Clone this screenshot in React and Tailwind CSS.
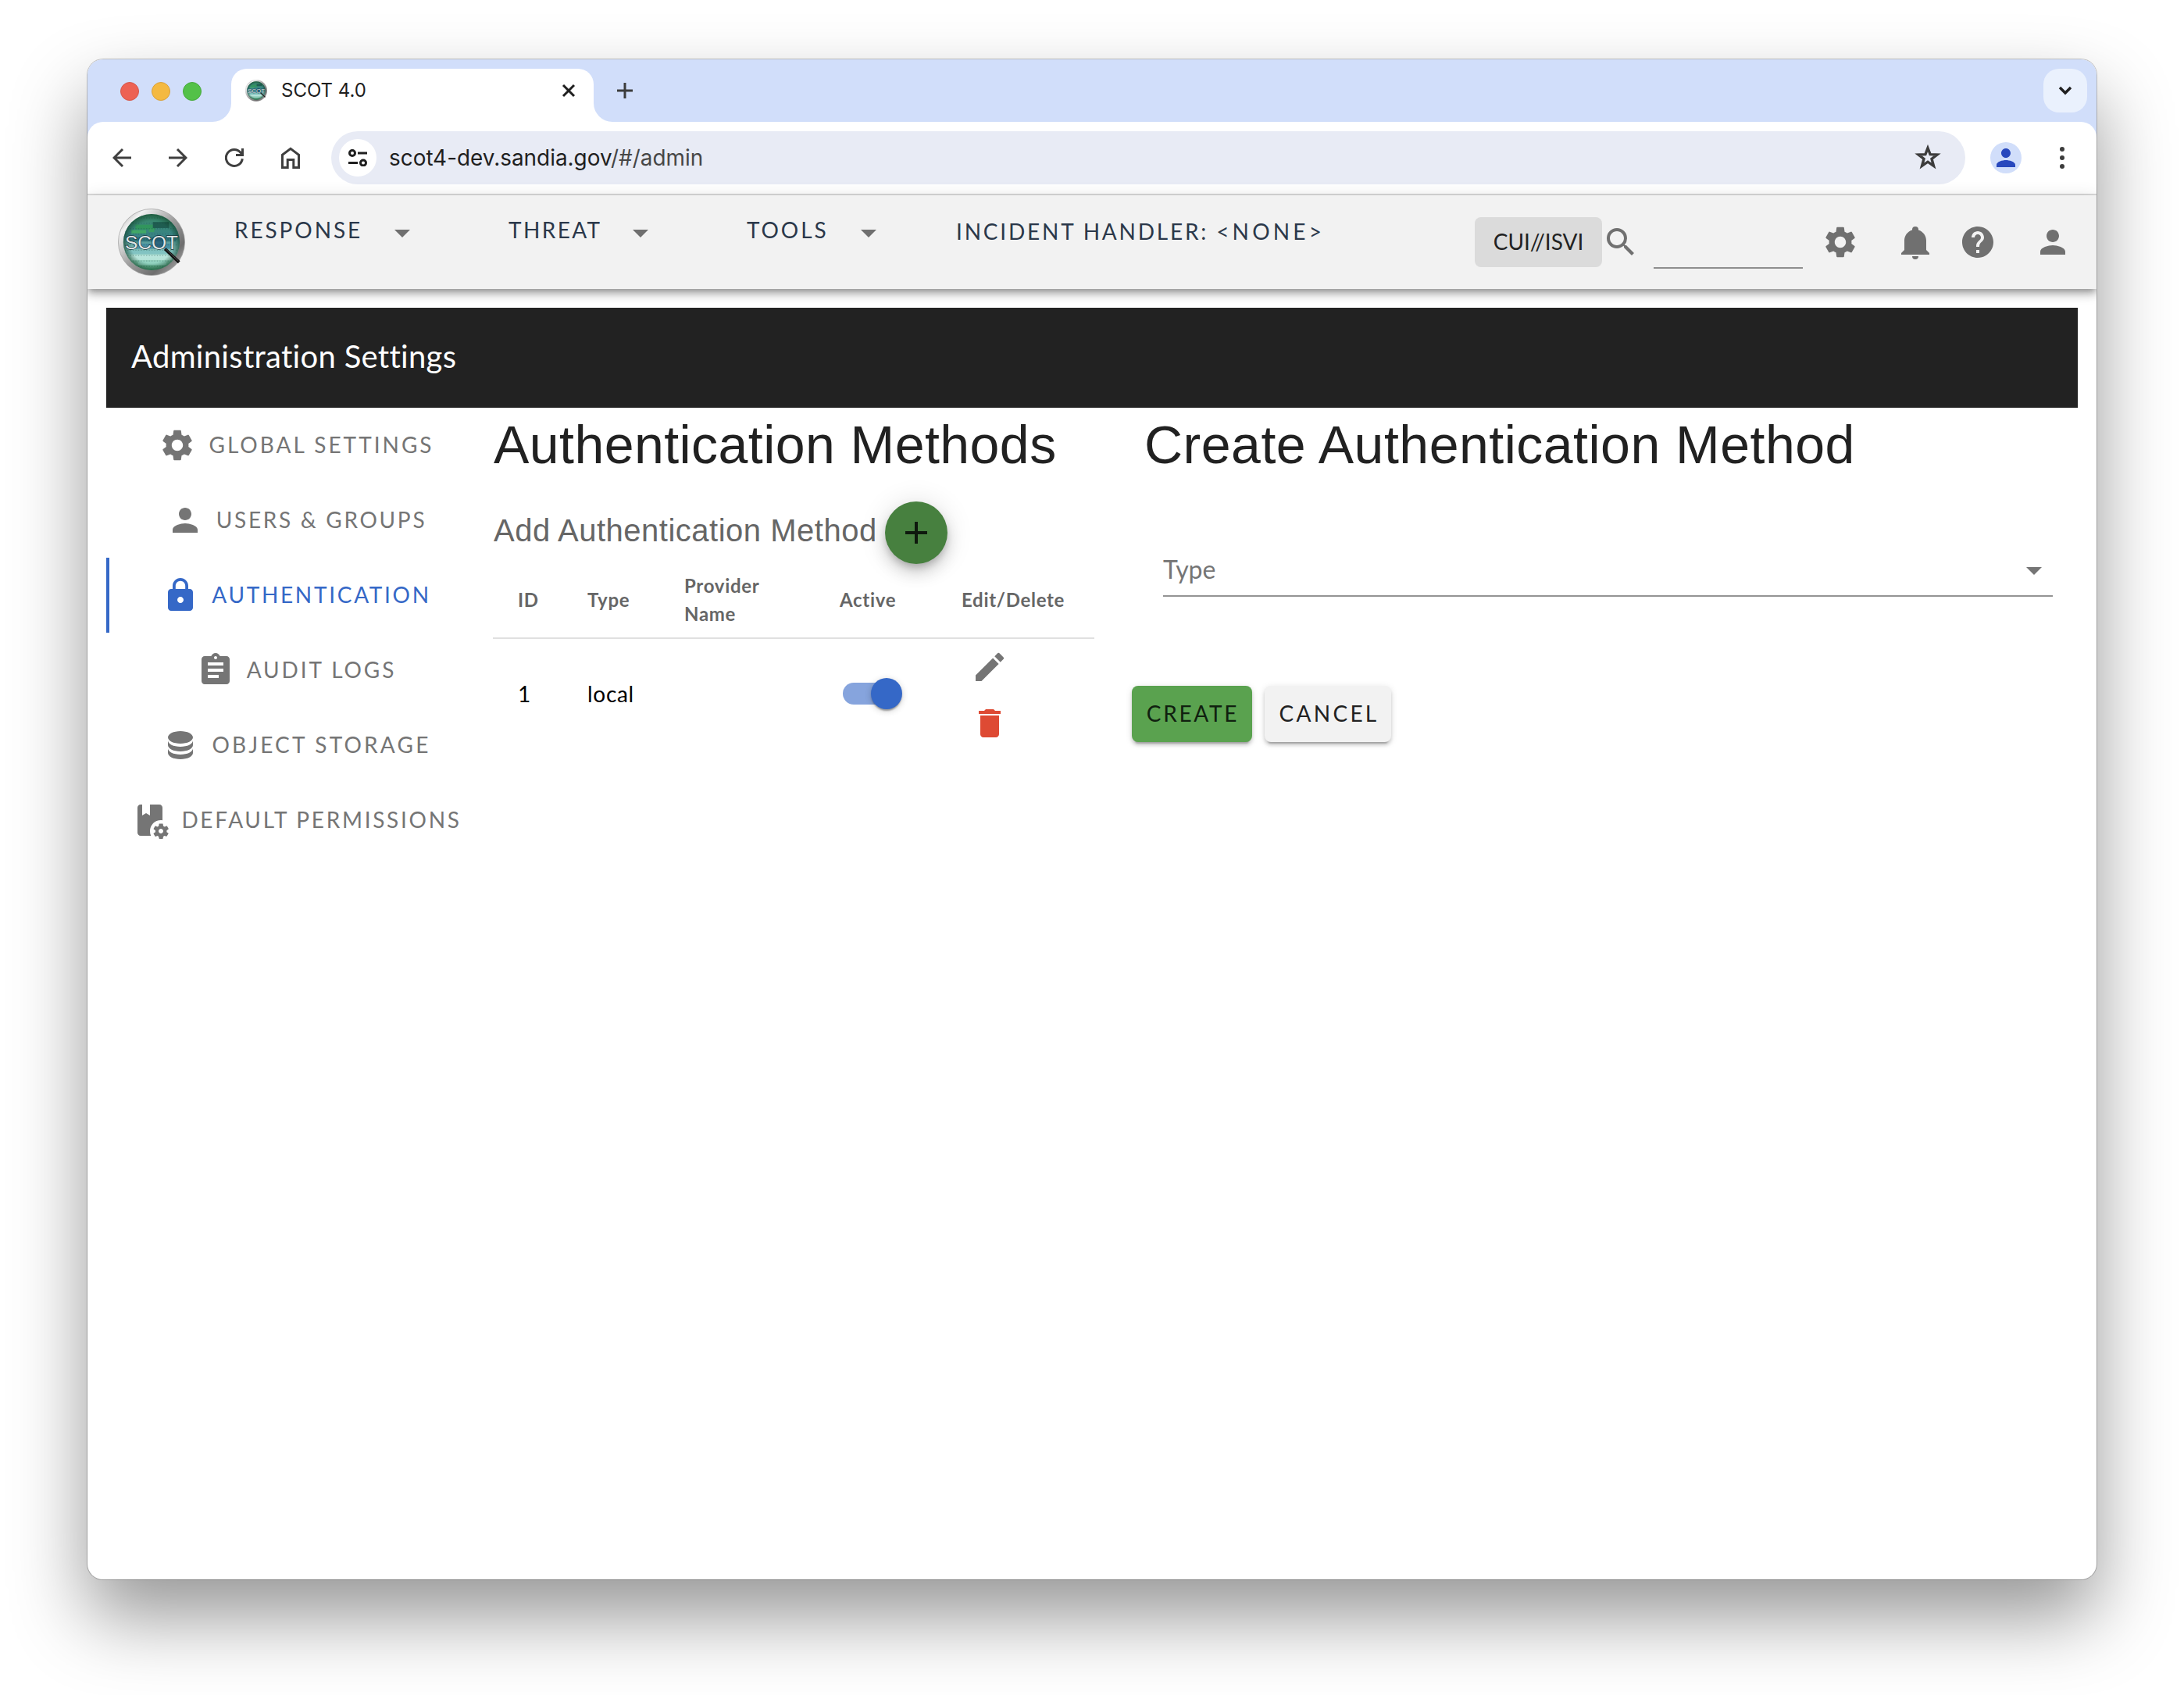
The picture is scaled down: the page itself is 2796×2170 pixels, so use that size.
import React from "react";
import {
  MdAdd,
  MdArrowDropDown,
  MdAssignment,
  MdDelete,
  MdEdit,
  MdHelp,
  MdLock,
  MdPerson,
  MdSearch,
  MdSettings,
} from "react-icons/md";

const BELL_PATH =
  "M21,19V20H3V19L5,17V11C5,7.9 7.03,5.17 10,4.29C10,4.19 10,4.1 10,4A2,2 0 0,1 12,2A2,2 0 0,1 14,4C14,4.1 14,4.19 14,4.29C16.97,5.17 19,7.9 19,11V17L21,19M14,21A2,2 0 0,1 12,23A2,2 0 0,1 10,21";
const DB_PATH =
  "M12,3C7.58,3 4,4.79 4,7C4,9.21 7.58,11 12,11C16.42,11 20,9.21 20,7C20,4.79 16.42,3 12,3M4,9V12C4,14.21 7.58,16 12,16C16.42,16 20,14.21 20,12V9C20,11.21 16.42,13 12,13C7.58,13 4,11.21 4,9M4,14V17C4,19.21 7.58,21 12,21C16.42,21 20,19.21 20,17V14C20,16.21 16.42,18 12,18C7.58,18 4,16.21 4,14Z";
const BOOK_COG_PATH =
  "M18 2C19.1 2 20 2.9 20 4V12.1C19.7 12 19.3 12 19 12C15.1 12 12 15.1 12 19C12 20.1 12.2 21.1 12.6 22H6C4.9 22 4 21.1 4 20V4C4 2.9 4.9 2 6 2H7V9L9.5 7.5L12 9V2H18M23.8 20.4C23.9 20.4 23.9 20.5 23.8 20.6L22.8 22.3C22.7 22.4 22.6 22.4 22.5 22.4L21.3 22C21 22.2 20.8 22.3 20.5 22.5L20.3 23.8C20.3 23.9 20.2 24 20.1 24H18.1C18 24 17.9 23.9 17.8 23.8L17.6 22.5C17.3 22.4 17 22.2 16.8 22L15.6 22.5C15.5 22.5 15.4 22.5 15.3 22.4L14.3 20.7C14.2 20.6 14.3 20.5 14.4 20.4L15.5 19.6V18.6L14.4 17.8C14.3 17.7 14.3 17.6 14.3 17.5L15.3 15.8C15.4 15.7 15.5 15.7 15.6 15.7L16.8 16.2C17.1 16 17.3 15.9 17.6 15.7L17.8 14.4C17.8 14.3 17.9 14.2 18.1 14.2H20.1C20.2 14.2 20.3 14.3 20.3 14.4L20.5 15.7C20.8 15.8 21.1 16 21.4 16.2L22.6 15.7C22.7 15.7 22.9 15.7 22.9 15.8L23.9 17.5C24 17.6 23.9 17.7 23.8 17.8L22.7 18.6V19.6L23.8 20.4M20.5 19C20.5 18.2 19.8 17.5 19 17.5S17.5 18.2 17.5 19 18.2 20.5 19 20.5 20.5 19.8 20.5 19Z";

function PathIcon({ d, className }) {
  return (
    <svg viewBox="0 0 24 24" fill="currentColor" className={className}>
      <path d={d} />
    </svg>
  );
}

function ScotLogo({ className, id }) {
  const rows = [
    [26, 24, 30, 7, "#2f9a55"],
    [20, 32, 22, 5, "#44b45f"],
    [46, 30, 8, 5, "#3aa35a"],
    [52, 20, 24, 9, "#174f45"],
    [14, 42, 72, 7, "#276b74"],
    [24, 52, 54, 8, "#3a86a0"],
    [12, 62, 76, 6, "#7cc0c2"],
    [20, 69, 60, 8, "#bfe8e0"],
    [30, 78, 42, 6, "#9ad8c8"],
  ];
  return (
    <svg viewBox="0 0 100 100" className={className}>
      <defs>
        <linearGradient id={id + "rim"} x1="0" y1="0" x2="1" y2="1">
          <stop offset="0" stopColor="#8d8d8d" />
          <stop offset="0.2" stopColor="#f1f1f1" />
          <stop offset="0.5" stopColor="#9c9c9c" />
          <stop offset="0.75" stopColor="#6e6e6e" />
          <stop offset="1" stopColor="#c9c9c9" />
        </linearGradient>
        <linearGradient id={id + "fill"} x1="0" y1="0" x2="0" y2="1">
          <stop offset="0" stopColor="#3a8a66" />
          <stop offset="0.4" stopColor="#3a8487" />
          <stop offset="0.75" stopColor="#a6dccf" />
          <stop offset="1" stopColor="#4fa97c" />
        </linearGradient>
        <radialGradient id={id + "edge"}>
          <stop offset="0.75" stopColor="#0c3b24" stopOpacity="0" />
          <stop offset="1" stopColor="#0c3b24" stopOpacity="0.6" />
        </radialGradient>
        <clipPath id={id + "clip"}>
          <circle cx="50" cy="50" r="42" />
        </clipPath>
      </defs>
      <circle cx="50" cy="50" r="49.5" fill={`url(#${id}rim)`} stroke="#9a9a9a" strokeWidth="0.8" />
      <circle cx="50" cy="50" r="42" fill={`url(#${id}fill)`} />
      <g clipPath={`url(#${id}clip)`} opacity="0.75">
        {rows.map(([x, y, w, h, c]) => (
          <rect key={y + "-" + x} x={x} y={y} width={w} height={h} fill={c} />
        ))}
        {[14, 22, 30, 38, 46, 54, 62, 70, 78, 86].map((y) => (
          <line key={y} x1="10" x2="90" y1={y} y2={y} stroke="#0f3d38" strokeWidth="1.6" strokeDasharray="1.5 2.5" opacity="0.35" />
        ))}
      </g>
      <circle cx="50" cy="50" r="42" fill={`url(#${id}edge)`} />
      <circle cx="60.5" cy="49" r="10" fill="#1d5170" opacity="0.7" />
      <text
        x="50"
        y="60"
        textAnchor="middle"
        textLength="79"
        lengthAdjust="spacingAndGlyphs"
        fontFamily="Liberation Sans, Arial, sans-serif"
        fontSize="28"
        fill="#dfe6e6"
        stroke="#16333a"
        strokeWidth="1.6"
        paintOrder="stroke"
      >
        SCOT
      </text>
      <line x1="70" y1="60" x2="91" y2="80" stroke="#121212" strokeWidth="4.6" />
      <line x1="71" y1="60" x2="90" y2="78" stroke="#6b6b6b" strokeWidth="0.8" />
    </svg>
  );
}

function TabStrip() {
  return (
    <div className="flex h-20 items-end bg-[#d1defa]">
      <div className="flex h-[68px] w-[160px] items-center gap-4 self-end pl-[42px] pb-[10px]">
        <span className="h-6 w-6 rounded-full border border-[#d5574b] bg-[#ed6254]" />
        <span className="h-6 w-6 rounded-full border border-[#d9a13c] bg-[#f4b941]" />
        <span className="h-6 w-6 rounded-full border border-[#47a93c] bg-[#53c148]" />
      </div>
      <svg viewBox="0 0 24 24" className="h-6 w-6 text-white" fill="currentColor">
        <path d="M24 0V24H0A24 24 0 0 0 24 0Z" />
      </svg>
      <div className="flex h-[68px] w-[464px] items-center rounded-t-[20px] bg-white pb-[12px] pl-[18px] pr-[22px]">
        <ScotLogo id="tab" className="h-7 w-7" />
        <span className="ml-[18px] flex-1 font-['Inter'] text-[24px] leading-7 text-[#1f1f1f]">SCOT 4.0</span>
        <svg viewBox="0 0 20 20" className="h-5 w-5" stroke="#1f1f1f" strokeWidth="3" fill="none">
          <path d="M3 3L17 17M17 3L3 17" />
        </svg>
      </div>
      <svg viewBox="0 0 24 24" className="h-6 w-6 text-white" fill="currentColor">
        <path d="M0 0V24H24A24 24 0 0 1 0 0Z" />
      </svg>
      <svg viewBox="0 0 20 20" className="mb-[30px] ml-[6px] h-5 w-5" stroke="#3c3c3c" strokeWidth="3" fill="none">
        <path d="M10 0V20M0 10H20" />
      </svg>
      <div className="mb-3 ml-auto mr-3 flex h-14 w-14 items-center justify-center rounded-[20px] bg-[#eaf1fd]">
        <svg viewBox="0 0 18 12" className="h-3 w-[18px]" stroke="#1f1f1f" strokeWidth="3.4" fill="none">
          <path d="M2 2L9 9L16 2" />
        </svg>
      </div>
    </div>
  );
}

function Toolbar() {
  return (
    <div className="bg-[#d1defa]">
      <div className="flex h-[94px] items-center rounded-t-[20px] border-b-2 border-[#dcdcdc] bg-white pl-8 pr-[41px]">
        <svg viewBox="0 0 24 28" className="h-7 w-6" stroke="#3f3f3f" strokeWidth="3" fill="none">
          <path d="M24 14H2M13 3L2 14L13 25" />
        </svg>
        <svg viewBox="0 0 24 28" className="ml-12 h-7 w-6" stroke="#3f3f3f" strokeWidth="3" fill="none">
          <path d="M0 14H22M11 3L22 14L11 25" />
        </svg>
        <svg viewBox="0 0 24 28" className="ml-12 h-7 w-6" stroke="#3f3f3f" strokeWidth="3" fill="none">
          <path d="M22.3 15.2A10.5 10.5 0 1 1 20.2 7.5L22.3 10.5" />
          <path d="M22.5 2V10.5H14" />
        </svg>
        <svg viewBox="0 0 24 28" className="ml-12 h-7 w-6" stroke="#3f3f3f" strokeWidth="3" fill="none">
          <path d="M1.5 10.2L12 2.4L22.5 10.2V26.5H15.8V16.5H8.2V26.5H1.5Z" />
        </svg>
        <div className="ml-10 flex h-[68px] w-[2092px] items-center rounded-full bg-[#e8ebf5] pl-[10px] pr-[28px]">
          <div className="flex h-12 w-12 items-center justify-center rounded-full bg-white">
            <svg viewBox="0 0 24 22" className="h-[22px] w-6" stroke="#1f1f1f" strokeWidth="3" fill="none">
              <circle cx="5" cy="5" r="3.5" />
              <path d="M12 5H24M0 17.5H12" />
              <circle cx="19" cy="17.5" r="3.5" />
            </svg>
          </div>
          <span className="ml-4 flex-1 font-['Inter'] text-[27.9px] leading-9 text-[#1f1f1f]">
            scot4-dev.sandia.gov<span className="text-[#474747]">/#/admin</span>
          </span>
          <svg viewBox="0 0 40 40" className="h-10 w-10 text-[#3c3c3c]" fill="none" stroke="currentColor" strokeWidth="3.4">
            <path d="M20 7.5L23.1 15.7L32 16.1L25 21.5L27.5 30.4L20 25.2L12.5 30.4L15 21.5L8 16.1L16.9 15.7Z" />
          </svg>
        </div>
        <div className="ml-8 flex h-10 w-10 items-center justify-center rounded-full bg-[#d1defa]">
          <MdPerson className="h-9 w-9 text-[#2848bd]" />
        </div>
        <svg viewBox="0 0 6 28" className="ml-[49px] h-7 w-1.5" fill="#3c3c3c">
          <circle cx="3" cy="3" r="3" />
          <circle cx="3" cy="14" r="3" />
          <circle cx="3" cy="25" r="3" />
        </svg>
      </div>
    </div>
  );
}

function AppHeader() {
  return (
    <header className="relative flex h-[120px] bg-[#f2f2f2] pl-[39px] text-[28px] leading-[40px] text-[#2b384a] shadow-[0_4px_8px_-2px_rgba(0,0,0,0.3),0_8px_10px_0_rgba(0,0,0,0.16),0_2px_20px_0_rgba(0,0,0,0.12)]">
      <ScotLogo id="head" className="mt-[17px] h-[86px] w-[86px]" />
      <nav className="ml-[63px] flex whitespace-nowrap pt-6">
        <span className="w-[191px] tracking-[2.9px]">RESPONSE</span>
        <MdArrowDropDown className="h-12 w-12 text-[#6f6f6f]" />
        <span className="ml-[112px] w-[145px] tracking-[2.4px]">THREAT</span>
        <MdArrowDropDown className="h-12 w-12 text-[#6f6f6f]" />
        <span className="ml-[112px] w-[132px] tracking-[2.9px]">TOOLS</span>
        <MdArrowDropDown className="h-12 w-12 text-[#6f6f6f]" />
        <span className="ml-[88px] mt-0.5 w-[480px] tracking-[2.8px]">
          INCIDENT HANDLER: <span className="tracking-[4.2px]">{"<NONE>"}</span>
        </span>
      </nav>
      <div className="ml-auto mr-8 flex h-[120px] items-center text-[#707070]">
        <div className="flex h-16 w-[163px] items-center justify-center rounded-lg bg-[#dbdbdb] pb-0.5 text-[#222]">CUI//ISVI</div>
        <MdSearch className="h-12 w-12" />
        <div className="ml-[18px] h-[68px] w-[191px] border-b-2 border-[#8f8f8f]" />
        <MdSettings className="ml-6 h-12 w-12" />
        <PathIcon d={BELL_PATH} className="ml-12 h-12 w-12" />
        <MdHelp className="ml-8 h-12 w-12" />
        <MdPerson className="ml-12 h-12 w-12" />
      </div>
    </header>
  );
}

function SideTab({ icon, active, spacing, children }) {
  return (
    <div
      className={
        active
          ? "relative flex h-24 items-center justify-center gap-4 pl-px text-[#3568c7]"
          : "relative flex h-24 items-center justify-center gap-4 pl-px text-[#757575]"
      }
    >
      {active && <span className="absolute left-0 top-0 h-24 w-1 bg-[#3568c7]" />}
      {icon}
      <span className={"whitespace-nowrap pb-0.5 text-[28px] leading-10 " + spacing}>{children}</span>
    </div>
  );
}

function Sidebar() {
  return (
    <nav className="w-[486px]">
      <SideTab spacing="tracking-[3px]" icon={<MdSettings className="h-12 w-12" />}>GLOBAL SETTINGS</SideTab>
      <SideTab spacing="tracking-[2.7px]" icon={<MdPerson className="h-12 w-12" />}>USERS &amp; GROUPS</SideTab>
      <SideTab active spacing="tracking-[2.7px]" icon={<MdLock className="h-12 w-12" />}>AUTHENTICATION</SideTab>
      <SideTab spacing="tracking-[2.9px]" icon={<MdAssignment className="h-12 w-12" />}>AUDIT LOGS</SideTab>
      <SideTab spacing="tracking-[3.2px]" icon={<PathIcon d={DB_PATH} className="h-12 w-12" />}>OBJECT STORAGE</SideTab>
      <SideTab spacing="tracking-[2.7px]" icon={<PathIcon d={BOOK_COG_PATH} className="h-12 w-12" />}>DEFAULT PERMISSIONS</SideTab>
    </nav>
  );
}

function MethodsPanel() {
  return (
    <section className="ml-[9px] w-[770px]">
      <h1 className="whitespace-nowrap pl-px pt-[7px] font-['Liberation_Sans'] text-[68px] leading-[80px] tracking-[0.45px] text-[#212121]">
        Authentication Methods
      </h1>
      <div className="mt-[33px] flex h-20 items-center">
        <h2 className="w-[502px] whitespace-nowrap pb-[7px] pl-px font-['Liberation_Sans'] text-[40px] leading-[56px] tracking-[0.5px] text-[#666]">
          Add Authentication Method
        </h2>
        <button className="flex h-20 w-20 items-center justify-center rounded-full bg-[#47803f] text-[#0e190d] shadow-[0_6px_10px_-2px_rgba(0,0,0,0.2),0_12px_20px_0_rgba(0,0,0,0.14),0_2px_36px_0_rgba(0,0,0,0.12)]">
          <MdAdd className="h-12 w-12" />
        </button>
      </div>
      <div className="grid h-24 grid-cols-[89px_124px_199px_156px_202px] items-center border-b-2 border-[#e0e0e0] pb-[3px] text-[24px] font-bold leading-9 tracking-[0.7px] text-[#666]">
        <span className="pl-8">ID</span>
        <span className="pl-8">Type</span>
        <span className="w-[170px] pl-8">
          Provider
          <br />
          Name
        </span>
        <span className="pl-8">Active</span>
        <span className="pl-8">Edit/Delete</span>
      </div>
      <div className="grid h-[140px] grid-cols-[89px_124px_199px_156px_202px] items-center text-[28px] leading-10 text-black">
        <span className="pl-8">1</span>
        <span className="pl-8 tracking-[0.7px]">local</span>
        <span />
        <span className="pl-[36px]">
          <span className="flex h-7 w-[68px] items-center rounded-full bg-[#86a4dd] pl-9">
            <span className="h-10 w-10 shrink-0 rounded-full bg-[#3568c7] shadow-[0_4px_2px_-2px_rgba(0,0,0,0.2),0_2px_2px_0_rgba(0,0,0,0.14),0_2px_8px_0_rgba(0,0,0,0.2)]" />
          </span>
        </span>
        <span className="flex flex-col gap-6 pl-[44px] pt-1">
          <MdEdit className="h-12 w-12 text-[#757575]" />
          <MdDelete className="h-12 w-12 text-[#de4a33]" />
        </span>
      </div>
    </section>
  );
}

function CreatePanel() {
  return (
    <section className="ml-[48px]">
      <h1 className="whitespace-nowrap pl-[16px] pt-[7px] font-['Liberation_Sans'] text-[68px] leading-[80px] tracking-[0.5px] text-[#212121]">
        Create Authentication Method
      </h1>
      <div className="ml-10 mt-[85px] flex h-[70px] w-[1139px] items-start justify-between border-b-2 border-[#949494] text-[#757575]">
        <span className="pt-[15px] text-[32px] leading-10">Type</span>
        <MdArrowDropDown className="mt-[12px] h-12 w-12" />
      </div>
      <div className="mt-[114px] flex gap-4 text-[28px] leading-10">
        <button className="h-[72px] w-[154px] rounded-lg bg-[#5aa24f] pb-0.5 pl-0.5 tracking-[2.7px] text-[#10200f] shadow-[0_6px_2px_-4px_rgba(0,0,0,0.2),0_4px_4px_0_rgba(0,0,0,0.14),0_2px_10px_0_rgba(0,0,0,0.12)]">
          CREATE
        </button>
        <button className="h-[72px] w-[162px] rounded-lg bg-[#f2f2f2] pb-0.5 pl-[3px] tracking-[3.3px] text-[#212121] shadow-[0_6px_2px_-4px_rgba(0,0,0,0.2),0_4px_4px_0_rgba(0,0,0,0.14),0_2px_10px_0_rgba(0,0,0,0.12)]">
          CANCEL
        </button>
      </div>
    </section>
  );
}

export default function App() {
  return (
    <div className="h-[2170px] w-[2796px] overflow-hidden bg-white pl-[112px] pt-[76px] font-['Lato',sans-serif]">
      <div className="h-[1946px] w-[2572px] overflow-hidden rounded-[20px] bg-white shadow-[0_0_0_1px_rgba(0,0,0,0.22),0_48px_96px_0_rgba(0,0,0,0.41)]">
        <TabStrip />
        <Toolbar />
        <AppHeader />
        <main className="px-6 pt-6">
          <div className="flex h-32 items-center bg-[#222] pb-1 pl-8">
            <span className="text-[40px] leading-[64px] tracking-[0.3px] text-white">Administration Settings</span>
          </div>
          <div className="flex items-start">
            <Sidebar />
            <MethodsPanel />
            <CreatePanel />
          </div>
        </main>
      </div>
    </div>
  );
}
